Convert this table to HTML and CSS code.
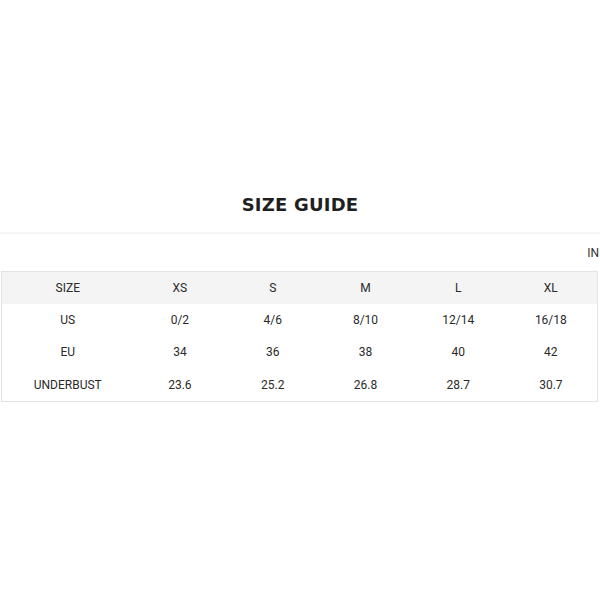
FILE: index.html
```html
<!DOCTYPE html>
<html>
<head>
<meta charset="utf-8">
<link rel="stylesheet" href="styles.css">
</head>
<body>
<div class="page">
  <h1 class="title">SIZE GUIDE</h1>
  <div class="divider"></div>
  <div class="unit-row"><span class="unit">IN</span></div>
  <table class="size-table">
    <colgroup><col class="col-first"><col><col><col><col><col></colgroup>
    <thead>
      <tr><th>SIZE</th><th>XS</th><th>S</th><th>M</th><th>L</th><th>XL</th></tr>
    </thead>
    <tbody>
      <tr><td>US</td><td>0/2</td><td>4/6</td><td>8/10</td><td>12/14</td><td>16/18</td></tr>
      <tr><td>EU</td><td>34</td><td>36</td><td>38</td><td>40</td><td>42</td></tr>
      <tr><td>UNDERBUST</td><td>23.6</td><td>25.2</td><td>26.8</td><td>28.7</td><td>30.7</td></tr>
    </tbody>
  </table>
</div>
</body>
</html>
```
FILE: styles.css
```css
html, body {
  margin: 0;
  padding: 0;
  background: #fff;
}
.page {
  padding-top: 193px;
  font-family: Roboto, "Noto Sans", Arial, sans-serif;
  color: #333;
}
.title {
  margin: 0;
  text-align: center;
  font-family: "DejaVu Sans", Verdana, sans-serif;
  font-weight: bold;
  font-size: 18px;
  line-height: 24px;
  letter-spacing: 0.2px;
  color: #1f1f1f;
}
.divider {
  margin-top: 15px;
  height: 2px;
  background: #f5f5f5;
}
.unit-row {
  margin-top: 11px;
  display: flex;
  justify-content: flex-end;
  padding-right: 1px;
  height: 16px;
  line-height: 16px;
  font-size: 12px;
}
.size-table {
  margin: 10px 1px 0 1px;
  width: 597px;
  border-collapse: collapse;
  border: 1px solid #e3e3e3;
  table-layout: fixed;
  font-size: 12px;
}
.col-first {
  width: 132px;
}
.size-table th,
.size-table td {
  height: 32px;
  padding: 0;
  text-align: center;
  font-weight: normal;
  color: #2a2a2a;
}
.size-table tbody tr:last-child td {
  height: 33px;
}
.size-table thead tr {
  background: #f4f4f4;
}
```
